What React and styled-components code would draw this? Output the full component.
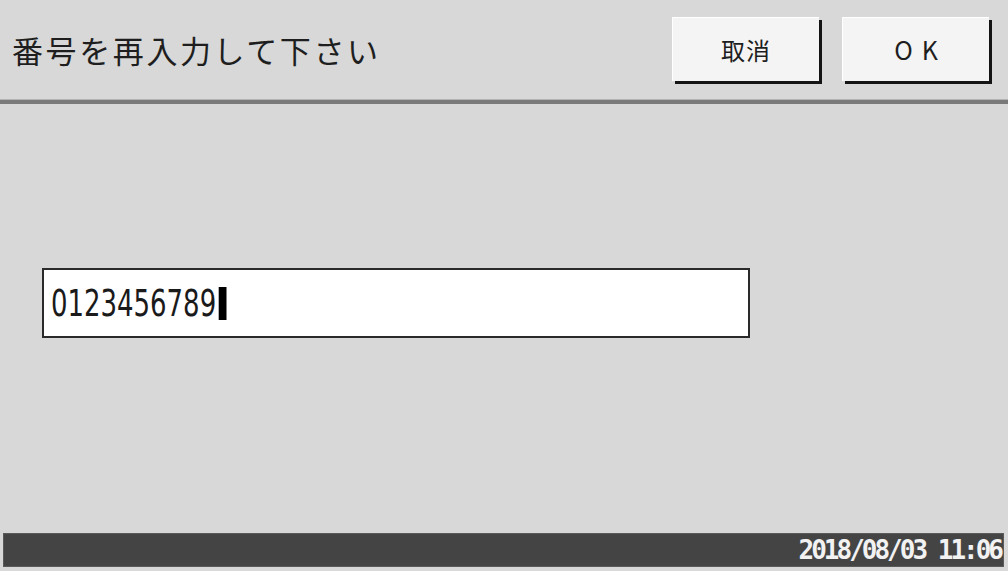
import React from 'react'
import styled, { createGlobalStyle } from 'styled-components'

const GlobalStyle = createGlobalStyle`
  html, body {
    margin: 0;
    padding: 0;
    background: #d8d8d8;
  }
`

const Screen = styled.div`
  width: 1008px;
  height: 571px;
  background: #d8d8d8;
  display: flex;
  flex-direction: column;
  font-family: 'Noto Sans CJK JP', 'DejaVu Sans', sans-serif;
  overflow: hidden;
`

const Header = styled.header`
  height: 100px;
  display: flex;
  align-items: center;
  padding: 0 19px 0 12px;
  border-bottom: 4px solid #7a7a7a;
  box-shadow: 0 -1px 0 #b4b4b4 inset;
`

const Title = styled.h1`
  flex: 1;
  margin: 0;
  font-size: 31px;
  font-weight: 400;
  letter-spacing: 2.6px;
  color: #1e1e1e;
  padding-bottom: 2px;
`

const Buttons = styled.div`
  display: flex;
  gap: 23px;
  padding-bottom: 3px;
`

const Button = styled.button`
  width: 147px;
  height: 64px;
  padding: 0;
  border: none;
  border-top: 1px solid #ffffff;
  border-left: 1px solid #ffffff;
  background: #f4f4f4;
  box-shadow: 3px 3px 0 #141414;
  color: #1e1e1e;
  font-family: 'Noto Sans CJK JP', sans-serif;
  font-size: ${p => (p.$latin ? '25px' : '24px')};
  letter-spacing: ${p => (p.$latin ? '9px' : '1px')};
  text-indent: ${p => (p.$latin ? '9px' : '0')};
  cursor: pointer;
`

const Main = styled.main`
  flex: 1;
  padding: 164px 0 0 42px;
`

const Field = styled.div`
  width: 708px;
  height: 70px;
  box-sizing: border-box;
  border: 2px solid #2a2a2a;
  background: #ffffff;
  display: flex;
  align-items: center;
  padding-left: 7px;
`

const Entry = styled.span`
  display: inline-flex;
  align-items: center;
  transform: scaleX(0.78);
  transform-origin: left center;
`

const Digits = styled.span`
  font-family: 'Liberation Sans Narrow', 'DejaVu Sans Condensed', sans-serif;
  font-size: 37px;
  line-height: 1;
  color: #1a1a1a;
`

const Caret = styled.span`
  display: inline-block;
  width: 10px;
  height: 33px;
  margin-left: 3px;
  background: #000;
`

const StatusBar = styled.footer`
  height: 32px;
  margin: 0 4px 4px 3px;
  background: #444444;
  border: 1px solid #5a5a5a;
  display: flex;
  align-items: center;
  justify-content: flex-end;
  padding-right: 2px;
`

const Clock = styled.span`
  font-family: 'DejaVu Sans Mono', monospace;
  font-size: 26px;
  font-weight: 700;
  letter-spacing: -3px;
  color: #f2f2f2;
`

export default function App() {
  return (
    <Screen>
      <GlobalStyle />
      <Header>
        <Title>番号を再入力して下さい</Title>
        <Buttons>
          <Button>取消</Button>
          <Button $latin>OK</Button>
        </Buttons>
      </Header>
      <Main>
        <Field>
          <Entry>
            <Digits>0123456789</Digits>
            <Caret />
          </Entry>
        </Field>
      </Main>
      <StatusBar>
        <Clock>2018/08/03 11:06</Clock>
      </StatusBar>
    </Screen>
  )
}
